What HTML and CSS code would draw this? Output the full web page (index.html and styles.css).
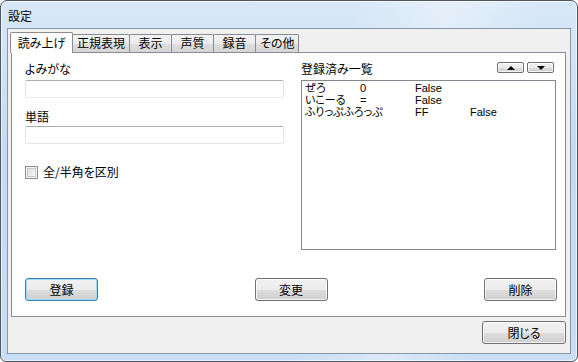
FILE: index.html
```html
<!DOCTYPE html>
<html lang="ja">
  <head>
    <meta charset="UTF-8" />
    <title>設定</title>
    <link rel="stylesheet" href="styles.css">
  </head>
  <body>
    <div class="window">
      <div class="titlebar">
        <span class="title">設定</span>
      </div>

      <div class="client">
        <div class="tab-strip">
          <div class="tab active">読み上げ</div>
          <div class="tab">正規表現</div>
          <div class="tab">表示</div>
          <div class="tab">声質</div>
          <div class="tab">録音</div>
          <div class="tab">その他</div>
        </div>

        <div class="tab-panel">
          <div class="panel-main">
            <div class="col-left">
              <div class="field-label">よみがな</div>
              <div class="textbox"></div>
              <div class="field-label second">単語</div>
              <div class="textbox"></div>
              <label class="check-row">
                <span class="checkbox"></span>
                <span>全/半角を区別</span>
              </label>
            </div>

            <div class="col-right">
              <div class="list-head">
                <span>登録済み一覧</span>
                <div class="order-buttons">
                  <button class="btn small"><span class="arrow up"></span></button>
                  <button class="btn small"><span class="arrow down"></span></button>
                </div>
              </div>
              <div class="listbox">
                <div class="list-row">ぜろ	0	False</div>
                <div class="list-row">いこーる	=	False</div>
                <div class="list-row">ふりっぷふろっぷ	FF	False</div>
              </div>
            </div>
          </div>

          <div class="action-row">
            <button class="btn action default">登録</button>
            <button class="btn action">変更</button>
            <button class="btn action">削除</button>
          </div>
        </div>

        <div class="footer">
          <button class="btn close">閉じる</button>
        </div>
      </div>
    </div>
  </body>
</html>
```

FILE: styles.css
```css
:root {
  --glass: #c6dbf2;
  --glass-light: #d8e8f8;
  --frame-edge: #4f5966;
  --client-bg: #f0f0f0;
  --client-edge: #8696ab;
  --tab-edge: #898c95;
  --text: #000000;
  --button-edge: #707070;
  --focus-edge: #3c7fb1;
}

* {
  box-sizing: border-box;
}

html,
body {
  margin: 0;
  padding: 0;
  width: 578px;
  height: 362px;
  overflow: hidden;
  background: #ffffff;
}

body {
  font-family: "Noto Sans CJK JP", "Noto Sans", sans-serif;
  font-size: 12px;
  font-feature-settings: "palt";
  color: var(--text);
}

button {
  font: inherit;
  color: inherit;
  margin: 0;
  padding: 0;
}

/* Aero frame */
.window {
  width: 578px;
  height: 362px;
  display: flex;
  flex-direction: column;
  border: 1px solid var(--frame-edge);
  border-radius: 7px 7px 6px 6px;
  padding: 0 6px 7px 6px;
  background:
    linear-gradient(100deg, transparent 55%, rgba(255, 255, 255, 0.35) 70%, transparent 85%),
    linear-gradient(180deg, var(--glass-light) 0%, var(--glass) 40%, #c9ddf3 100%);
  box-shadow: inset 0 0 0 1px rgba(255, 255, 255, 0.6);
}

.titlebar {
  height: 27px;
  padding: 6px 0 0 1px;
  flex: none;
}
.title {
  line-height: 16px;
  color: #000;
}

.client {
  flex: 1;
  display: flex;
  flex-direction: column;
  border: 1px solid var(--client-edge);
  background: var(--client-bg);
  padding: 3px 4px 9px 3px;
}

/* Tabs */
.tab-strip {
  display: flex;
  align-items: flex-end;
  height: 20px;
  margin-left: -1px;
  position: relative;
  z-index: 2;
}
.tab {
  min-width: 43px;
  height: 18px;
  padding: 0 4px;
  margin-right: -1px;
  line-height: 16px;
  text-align: center;
  border: 1px solid var(--tab-edge);
  border-bottom: none;
  border-radius: 2px 2px 0 0;
  background: linear-gradient(180deg, #f3f3f3 0%, #ebebeb 50%, #dedede 51%, #d5d5d5 100%);
}
.tab.active {
  min-width: 63px;
  height: 21px;
  margin-bottom: -1px;
  padding: 0 6px;
  line-height: 19px;
  background: #ffffff;
  position: relative;
  z-index: 3;
}

.tab-panel {
  height: 265px;
  flex: none;
  display: flex;
  flex-direction: column;
  border: 1px solid var(--tab-edge);
  background: #ffffff;
  padding: 9px 8px 15px 13px;
  position: relative;
  z-index: 1;
}

.panel-main {
  display: flex;
  gap: 17px;
}

.col-left {
  width: 259px;
  display: flex;
  flex-direction: column;
}
.field-label {
  line-height: 14px;
  margin-bottom: 4px;
}
.field-label.second {
  margin-top: 12px;
  margin-bottom: 2px;
}
.textbox {
  height: 18px;
  border: 1px solid #e2e3ea;
  border-top-color: #abadb3;
  border-bottom-color: #e3e9ef;
  border-radius: 2px;
  background: #ffffff;
}

.check-row {
  display: flex;
  align-items: center;
  gap: 5px;
  margin-top: 21px;
  line-height: 14px;
}
.checkbox {
  width: 13px;
  height: 13px;
  border: 1px solid #8e8f8f;
  background: linear-gradient(135deg, #dcdcdc 0%, #f2f2f2 70%, #fbfbfb 100%);
  box-shadow: inset 0 0 0 1px #f4f4f4, inset 0 0 0 2px #c9c9c9;
}

.col-right {
  width: 255px;
  display: flex;
  flex-direction: column;
}
.list-head {
  display: flex;
  justify-content: space-between;
  align-items: flex-start;
  line-height: 14px;
  margin-bottom: 4px;
}
.order-buttons {
  display: flex;
  gap: 3px;
  margin-right: 2px;
}
.listbox {
  height: 170px;
  border: 1px solid #828790;
  background: #ffffff;
  padding: 1px 3px;
}
.list-row {
  white-space: pre;
  tab-size: 55px;
  font-family: "Liberation Sans", "Noto Sans CJK JP", sans-serif;
  font-size: 11px;
  line-height: 12px;
  height: 12px;
}

/* Win7 push buttons */
.btn {
  display: flex;
  align-items: center;
  justify-content: center;
  border: 1px solid var(--button-edge);
  border-radius: 3px;
  background: linear-gradient(180deg, #f2f2f2 0%, #ebebeb 50%, #dddddd 51%, #cfcfcf 100%);
  box-shadow: inset 0 0 0 1px rgba(255, 255, 255, 0.75);
  cursor: pointer;
}
.btn.small {
  width: 27px;
  height: 11px;
  border-radius: 2px;
}
.arrow {
  width: 0;
  height: 0;
  border-left: 4px solid transparent;
  border-right: 4px solid transparent;
}
.arrow.up {
  border-bottom: 4px solid #000;
}
.arrow.down {
  border-top: 4px solid #000;
}

.action-row {
  margin-top: auto;
  display: flex;
  justify-content: space-between;
}
.btn.action {
  width: 73px;
  height: 23px;
}
.btn.default {
  border-color: var(--focus-edge);
  box-shadow: inset 0 0 0 1px #9edcf7;
}

.footer {
  margin-top: 4px;
  display: flex;
  justify-content: flex-end;
}
.btn.close {
  width: 84px;
  height: 23px;
}
```
